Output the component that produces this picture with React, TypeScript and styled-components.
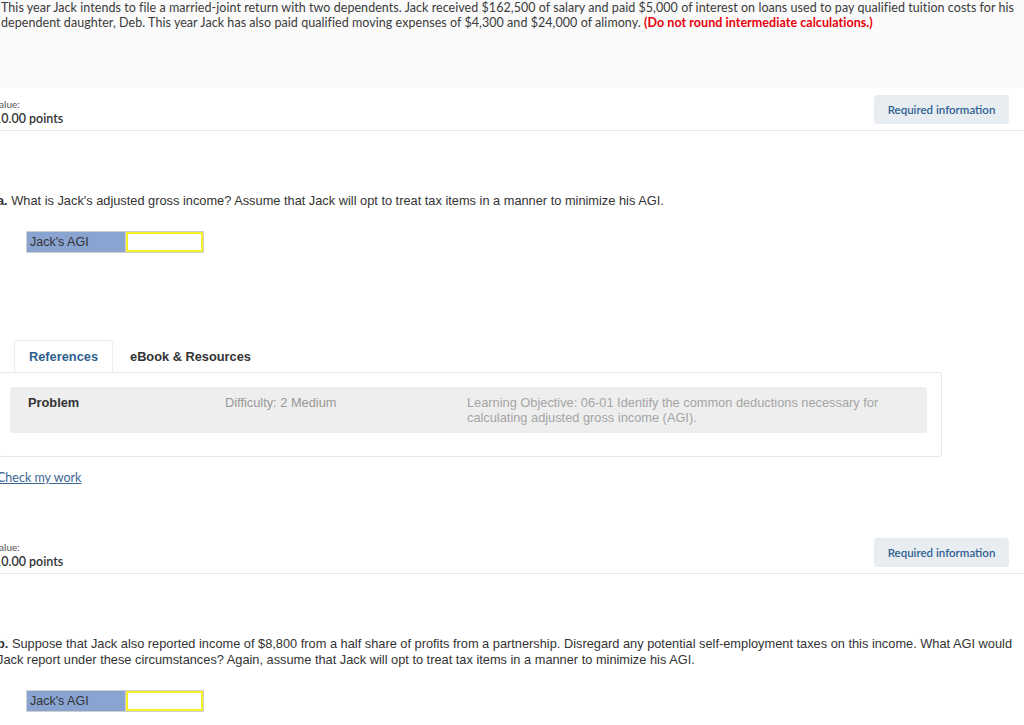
import React from 'react';
import styled, { createGlobalStyle } from 'styled-components';

const GlobalStyle = createGlobalStyle`
  html, body {
    margin: 0;
    padding: 0;
    background: #ffffff;
    overflow: hidden;
  }
  body {
    font-family: Lato, "Liberation Sans", Arial, sans-serif;
    color: #333333;
  }
`;

const Page = styled.div`
  width: 1024px;
  height: 725px;
  overflow: hidden;
`;

const Intro = styled.div`
  background: #fafafa;
  height: 88px;
  padding: 0 0 0 1px;
  box-sizing: border-box;
  font-size: 12.5px;
  line-height: 15px;
  color: #3b3b3b;
  letter-spacing: 0.05px;
`;

const Warning = styled.span`
  color: #e8000d;
  font-weight: 700;
`;

const Body = styled.div`
  margin-left: -6px;
  width: 1030px;
`;

const ItemHeader = styled.div<{ $top: number }>`
  display: flex;
  justify-content: space-between;
  align-items: flex-start;
  padding-top: ${(p) => p.$top}px;
  padding-bottom: 2px;
  border-bottom: 1px solid #e8e8e8;
`;

const PointsBlock = styled.div`
  padding-top: 4px;
`;

const ValueLabel = styled.div`
  font-size: 10px;
  line-height: 11px;
  color: #555;
`;

const Points = styled.div`
  font-size: 12.5px;
  line-height: 18px;
  font-weight: 600;
  color: #333;
`;

const InfoButton = styled.button`
  margin-right: 15px;
  height: 29px;
  width: 135px;
  border: none;
  border-radius: 3px;
  background: #e8edf2;
  color: #2e5f8e;
  font-family: Lato, "Liberation Sans", sans-serif;
  font-size: 11.5px;
  font-weight: 600;
  padding: 0;
`;

const Question = styled.p<{ $top: number }>`
  margin: ${(p) => p.$top}px 0 0 0;
  padding-left: 3px;
  font-family: "Liberation Sans", Arial, sans-serif;
  font-size: 12.8px;
  line-height: 16px;
  color: #333;
  width: 1028px;
`;

const Letter = styled.b`
  font-weight: 700;
`;

const AnswerTable = styled.div<{ $top: number }>`
  display: flex;
  margin: ${(p) => p.$top}px 0 0 32px;
  width: 178px;
  height: 22px;
  border: 1px solid #cfcfcf;
  box-sizing: border-box;
`;

const LabelCell = styled.div`
  width: 99px;
  background: #8aa4d2;
  font-family: "Liberation Sans", Arial, sans-serif;
  font-size: 12.5px;
  line-height: 20px;
  padding-left: 3px;
  color: #333;
  box-sizing: border-box;
  border-right: 1px solid #cfcfcf;
`;

const InputCell = styled.input`
  flex: 1;
  min-width: 0;
  border: 2px solid #f5f029;
  background: #fff;
  margin: 0;
  padding: 0;
  outline: none;
`;

const Tabs = styled.div`
  display: flex;
  align-items: flex-end;
  margin: 87px 0 0 20px;
  height: 32px;
`;

const Tab = styled.div<{ $active?: boolean }>`
  height: 32px;
  box-sizing: border-box;
  padding: 0 14px;
  display: flex;
  align-items: center;
  font-family: "Liberation Sans", Arial, sans-serif;
  font-size: 12.8px;
  font-weight: 700;
  color: ${(p) => (p.$active ? '#2f5f91' : '#333')};
  background: #fff;
  border: 1px solid ${(p) => (p.$active ? '#ececec' : 'transparent')};
  border-bottom: none;
  border-radius: 3px 3px 0 0;
  margin-right: ${(p) => (p.$active ? '2px' : '0')};
`;

const Card = styled.div`
  margin-left: 5px;
  width: 943px;
  height: 85px;
  box-sizing: border-box;
  border: 1px solid #e6e6e6;
  border-radius: 3px;
  padding: 14px 14px 0 10px;
`;

const RefRow = styled.div`
  display: grid;
  grid-template-columns: 197px 242px 1fr;
  background: #eeeeee;
  border-radius: 2px;
  height: 46px;
  box-sizing: border-box;
  padding: 8px 30px 0 18px;
  font-family: "Liberation Sans", Arial, sans-serif;
  font-size: 12.8px;
  line-height: 15px;
`;

const RefTitle = styled.div`
  font-weight: 700;
  color: #333;
`;

const RefMeta = styled.div`
  color: #999;
`;

const RefObjective = styled.div`
  color: #a5a5a5;
`;

const CheckLink = styled.a`
  display: inline-block;
  margin: 13px 0 0 3px;
  font-size: 12.5px;
  line-height: 16px;
  color: #3b6592;
  text-decoration: underline;
  cursor: pointer;
`;

export default function App() {
  return (
    <Page>
      <GlobalStyle />
      <Intro>
        This year Jack intends to file a married-joint return with two dependents. Jack received $162,500 of salary and
        paid $5,000 of interest on loans used to pay qualified tuition costs for his dependent daughter, Deb. This year
        Jack has also paid qualified moving expenses of $4,300 and $24,000 of alimony.{' '}
        <Warning>(Do not round intermediate calculations.)</Warning>
      </Intro>
      <Body>
        <ItemHeader $top={7}>
          <PointsBlock>
            <ValueLabel>value:</ValueLabel>
            <Points>10.00 points</Points>
          </PointsBlock>
          <InfoButton>Required information</InfoButton>
        </ItemHeader>

        <Question $top={62}>
          <Letter>a.</Letter> What is Jack's adjusted gross income? Assume that Jack will opt to treat tax items in a
          manner to minimize his AGI.
        </Question>
        <AnswerTable $top={22}>
          <LabelCell>Jack's AGI</LabelCell>
          <InputCell />
        </AnswerTable>

        <Tabs>
          <Tab $active>References</Tab>
          <Tab>eBook &amp; Resources</Tab>
        </Tabs>
        <Card>
          <RefRow>
            <RefTitle>Problem</RefTitle>
            <RefMeta>Difficulty: 2 Medium</RefMeta>
            <RefObjective>
              Learning Objective: 06-01 Identify the common deductions necessary for calculating adjusted gross income
              (AGI).
            </RefObjective>
          </RefRow>
        </Card>

        <CheckLink>Check my work</CheckLink>

        <ItemHeader $top={52}>
          <PointsBlock>
            <ValueLabel>value:</ValueLabel>
            <Points>10.00 points</Points>
          </PointsBlock>
          <InfoButton>Required information</InfoButton>
        </ItemHeader>

        <Question $top={62}>
          <Letter>b.</Letter> Suppose that Jack also reported income of $8,800 from a half share of profits from a
          partnership. Disregard any potential self-employment taxes on this income. What AGI would Jack report under
          these circumstances? Again, assume that Jack will opt to treat tax items in a manner to minimize his AGI.
        </Question>
        <AnswerTable $top={22}>
          <LabelCell>Jack's AGI</LabelCell>
          <InputCell />
        </AnswerTable>
      </Body>
    </Page>
  );
}
